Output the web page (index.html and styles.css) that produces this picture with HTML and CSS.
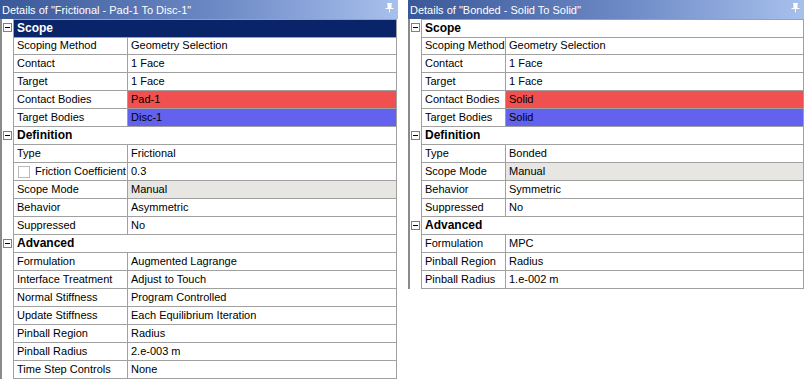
FILE: index.html
```html
<!DOCTYPE html>
<html lang="en">
<head>
  <meta charset="UTF-8" />
  <title>Contact Details</title>
  <link rel="stylesheet" href="styles.css">
</head>
<body>

  <div class="panels">
    <!-- Frictional contact -->
    <div class="panel panel-left">
      <div class="title-bar">
        <span>Details of "Frictional - Pad-1 To Disc-1"</span>
        <svg class="pin" width="9" height="10" viewBox="0 0 9 10">
          <path d="M2 0.5h5M3 0.5v5M6 0.5v5M0.5 5.5h8M4.5 5.5v4" stroke="#fff" stroke-width="1" fill="none"/>
          <rect x="3" y="1" width="3" height="4" fill="#fff"/>
        </svg>
      </div>
      <div class="grid">
        <div class="row section selected"><span class="toggle"></span><div class="head">Scope</div></div>
        <div class="row"><span class="gutter"></span><div class="prop">Scoping Method</div><div class="val">Geometry Selection</div></div>
        <div class="row"><span class="gutter"></span><div class="prop">Contact</div><div class="val">1 Face</div></div>
        <div class="row"><span class="gutter"></span><div class="prop">Target</div><div class="val">1 Face</div></div>
        <div class="row"><span class="gutter"></span><div class="prop">Contact Bodies</div><div class="val red">Pad-1</div></div>
        <div class="row"><span class="gutter"></span><div class="prop">Target Bodies</div><div class="val blue">Disc-1</div></div>
        <div class="row section"><span class="toggle"></span><div class="head">Definition</div></div>
        <div class="row"><span class="gutter"></span><div class="prop">Type</div><div class="val">Frictional</div></div>
        <div class="row"><span class="gutter"></span><div class="prop"><span class="check"></span>Friction Coefficient</div><div class="val">0.3</div></div>
        <div class="row"><span class="gutter"></span><div class="prop">Scope Mode</div><div class="val grey">Manual</div></div>
        <div class="row"><span class="gutter"></span><div class="prop">Behavior</div><div class="val">Asymmetric</div></div>
        <div class="row"><span class="gutter"></span><div class="prop">Suppressed</div><div class="val">No</div></div>
        <div class="row section"><span class="toggle"></span><div class="head">Advanced</div></div>
        <div class="row"><span class="gutter"></span><div class="prop">Formulation</div><div class="val">Augmented Lagrange</div></div>
        <div class="row"><span class="gutter"></span><div class="prop">Interface Treatment</div><div class="val">Adjust to Touch</div></div>
        <div class="row"><span class="gutter"></span><div class="prop">Normal Stiffness</div><div class="val">Program Controlled</div></div>
        <div class="row"><span class="gutter"></span><div class="prop">Update Stiffness</div><div class="val">Each Equilibrium Iteration</div></div>
        <div class="row"><span class="gutter"></span><div class="prop">Pinball Region</div><div class="val">Radius</div></div>
        <div class="row"><span class="gutter"></span><div class="prop">Pinball Radius</div><div class="val">2.e-003 m</div></div>
        <div class="row"><span class="gutter"></span><div class="prop">Time Step Controls</div><div class="val">None</div></div>
      </div>
    </div>

    <!-- Bonded contact -->
    <div class="panel panel-right">
      <div class="title-bar">
        <span>Details of "Bonded - Solid To Solid"</span>
        <svg class="pin" width="9" height="10" viewBox="0 0 9 10">
          <path d="M2 0.5h5M3 0.5v5M6 0.5v5M0.5 5.5h8M4.5 5.5v4" stroke="#fff" stroke-width="1" fill="none"/>
          <rect x="3" y="1" width="3" height="4" fill="#fff"/>
        </svg>
      </div>
      <div class="grid">
        <div class="row section"><span class="toggle"></span><div class="head">Scope</div></div>
        <div class="row"><span class="gutter"></span><div class="prop">Scoping Method</div><div class="val">Geometry Selection</div></div>
        <div class="row"><span class="gutter"></span><div class="prop">Contact</div><div class="val">1 Face</div></div>
        <div class="row"><span class="gutter"></span><div class="prop">Target</div><div class="val">1 Face</div></div>
        <div class="row"><span class="gutter"></span><div class="prop">Contact Bodies</div><div class="val red">Solid</div></div>
        <div class="row"><span class="gutter"></span><div class="prop">Target Bodies</div><div class="val blue">Solid</div></div>
        <div class="row section"><span class="toggle"></span><div class="head">Definition</div></div>
        <div class="row"><span class="gutter"></span><div class="prop">Type</div><div class="val">Bonded</div></div>
        <div class="row"><span class="gutter"></span><div class="prop">Scope Mode</div><div class="val grey">Manual</div></div>
        <div class="row"><span class="gutter"></span><div class="prop">Behavior</div><div class="val">Symmetric</div></div>
        <div class="row"><span class="gutter"></span><div class="prop">Suppressed</div><div class="val">No</div></div>
        <div class="row section"><span class="toggle"></span><div class="head">Advanced</div></div>
        <div class="row"><span class="gutter"></span><div class="prop">Formulation</div><div class="val">MPC</div></div>
        <div class="row"><span class="gutter"></span><div class="prop">Pinball Region</div><div class="val">Radius</div></div>
        <div class="row"><span class="gutter"></span><div class="prop">Pinball Radius</div><div class="val">1.e-002 m</div></div>
      </div>
    </div>
  </div>

</body>
</html>
```

FILE: styles.css
```css
body {
  margin: 0;
  padding: 0;
  background: #fff;
  font-family: "Liberation Sans", Arial, sans-serif;
  font-size: 11px;
  color: #000;
}

.panels {
  display: flex;
  gap: 10px;
  align-items: flex-start;
}

.panel-left {
  width: 398px;
}

.panel-right {
  width: 396px;
}

/* Title bar */
.title-bar {
  height: 19px;
  display: flex;
  align-items: center;
  justify-content: space-between;
  padding: 0 4px 0 2px;
  background: linear-gradient(to right, #3a5898, #6d8ac6 55%, #a8c0ec);
  color: #fff;
  font-size: 11px;
}

.pin {
  display: block;
  margin-top: -4px;
}

/* Property grid */
.grid {
  border-left: 2px solid #8a8a8a;
  border-right: 1px solid #a0a0a0;
}

.panel-left .grid {
  margin-right: 1px;
}

.row {
  display: grid;
  grid-template-columns: 12px 114px 1fr;
  height: 18px;
}

.panel-right .row {
  grid-template-columns: 12px 84px 1fr;
}

.gutter,
.toggle {
  border-right: 1px solid #a0a0a0;
  background: #fff;
  position: relative;
}

.toggle::before {
  content: "";
  position: absolute;
  left: 1px;
  top: 4px;
  width: 7px;
  height: 7px;
  border: 1px solid #808080;
  background: #fff;
}

.toggle::after {
  content: "";
  position: absolute;
  left: 3px;
  top: 8px;
  width: 5px;
  height: 1px;
  background: #000;
}

.prop,
.val {
  border-bottom: 1px solid #a0a0a0;
  line-height: 17px;
  white-space: nowrap;
  overflow: hidden;
}

.prop {
  border-right: 1px solid #a0a0a0;
  padding-left: 3px;
  display: flex;
  align-items: center;
}

.val {
  padding-left: 3px;
}

.row:first-child .head,
.row:first-child .prop,
.row:first-child .val {
  border-top: 1px solid #a0a0a0;
}

.head {
  grid-column: 2 / 4;
  border-bottom: 1px solid #a0a0a0;
  font-weight: bold;
  font-size: 12px;
  line-height: 17px;
  padding-left: 3px;
}

.section.selected .head {
  background: #0a246a;
  color: #fff;
}

.check {
  display: inline-block;
  width: 10px;
  height: 10px;
  border: 1px solid #b8b8b8;
  background: #fff;
  margin: 0 5px 0 1px;
}

.red {
  background: #f05050;
}

.blue {
  background: #6262ee;
}

.grey {
  background: #e8e6e2;
}
```
